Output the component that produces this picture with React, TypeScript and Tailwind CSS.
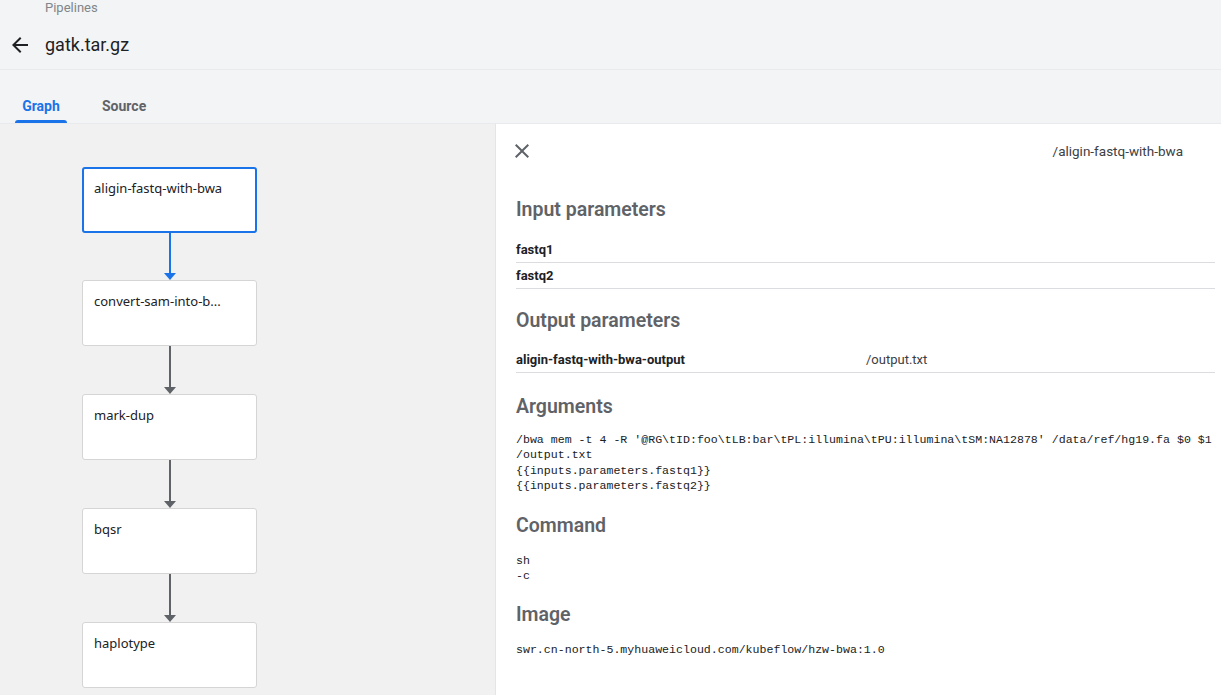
import React from 'react';

const nodes = ['aligin-fastq-with-bwa', 'convert-sam-into-b...', 'mark-dup', 'bqsr', 'haplotype'];

const args = [
  "/bwa mem -t 4 -R '@RG\\tID:foo\\tLB:bar\\tPL:illumina\\tPU:illumina\\tSM:NA12878' /data/ref/hg19.fa $0 $1",
  '/output.txt',
  '{{inputs.parameters.fastq1}}',
  '{{inputs.parameters.fastq2}}',
];

function Edge({ active, h }: { active: boolean; h: string }) {
  const color = active ? 'bg-[#1a73e8]' : 'bg-[#5f6368]';
  const tri = active ? 'border-t-[#1a73e8]' : 'border-t-[#5f6368]';
  return (
    <div className={`${h} w-[175px] flex flex-col items-center`}>
      <div className={`flex-1 w-[2px] ${color}`} />
      <div className={`w-0 h-0 border-l-[6px] border-r-[6px] border-t-[7px] border-l-transparent border-r-transparent ${tri}`} />
    </div>
  );
}

function Heading({ children, className = '' }: { children: React.ReactNode; className?: string }) {
  return (
    <h2 className={`h-[24px] leading-[24px] text-[19.5px] font-semibold text-[#5f6368] ${className}`}>
      {children}
    </h2>
  );
}

export default function App() {
  return (
    <div
      className="w-[1221px] h-[695px] overflow-hidden flex flex-col bg-[#f3f4f5]"
      style={{ fontFamily: 'Roboto, "Liberation Sans", sans-serif' }}
    >
      {/* header */}
      <div className="h-[70px] border-b border-[#e8eaed] shrink-0">
        <div className="h-[16px] leading-[16px] pl-[45px] text-[13px] text-[#80868b]">Pipelines</div>
        <div className="h-[53px] flex items-center pt-[4px]">
          <div className="w-[45px] flex pl-[8px]">
            <svg width="24" height="24" viewBox="0 0 24 24" className="text-[#202124]">
              <path fill="currentColor" d="M20 11H7.83l5.59-5.59L12 4l-8 8 8 8 1.41-1.41L7.83 13H20v-2z" />
            </svg>
          </div>
          <span className="text-[18px] text-[#202124]">gatk.tar.gz</span>
        </div>
      </div>

      {/* tabs */}
      <div className="h-[54px] border-b border-[#e8eaed] flex items-end pl-[15px] gap-[30px] shrink-0">
        <div className="flex flex-col items-center">
          <span className="px-[5px] text-[14px] font-bold text-[#1a73e8] leading-[20px]">Graph</span>
          <div className="mt-[4px] h-[3px] w-[52px] rounded-t-[3px] bg-[#1a73e8]" />
        </div>
        <div className="flex flex-col items-center">
          <span className="px-[5px] text-[14px] font-bold text-[#5f6368] leading-[20px]">Source</span>
          <div className="mt-[4px] h-[3px]" />
        </div>
      </div>

      {/* body */}
      <div className="flex-1 flex min-h-0">
        <div className="w-[496px] shrink-0 bg-[#f1f1f1] border-r border-[#e5e5e5] pl-[82px] pt-[43px]">
          {nodes.map((n, i) => (
            <div key={n}>
              <div
                className={`h-[66px] w-[175px] bg-white rounded-[3px] text-[13px] text-[#202124] ${
                  i === 0 ? 'border-2 border-[#1a73e8] px-[10px] pt-[10px]' : 'border border-[#d5d5d5] px-[11px] pt-[11px]'
                }`}
                style={{ fontFamily: '"Segoe UI", "Noto Sans", sans-serif' }}
              >
                {n}
              </div>
              {i < nodes.length - 1 && <Edge active={i === 0} h={i === 0 ? 'h-[47px]' : 'h-[48px]'} />}
            </div>
          ))}
        </div>

        <div className="flex-1 bg-white min-w-0">
          <div className="h-[54px] flex items-center justify-between pl-[14px] pr-[38px]">
            <svg width="24" height="24" viewBox="0 0 24 24" className="text-[#5f6368]">
              <path
                fill="currentColor"
                d="M19 6.41L17.59 5 12 10.59 6.41 5 5 6.41 10.59 12 5 17.59 6.41 19 12 13.41 17.59 19 19 17.59 13.41 12z"
              />
            </svg>
            <span className="text-[13.5px] text-[#3c4043]">/aligin-fastq-with-bwa</span>
          </div>

          <div className="pl-[20px] pr-[6px]">
            <Heading className="mt-[20px]">Input parameters</Heading>
            <div className="mt-[15px]">
              {['fastq1', 'fastq2'].map((p) => (
                <div key={p} className="h-[26px] border-b border-[#dadce0] flex items-center text-[13px] font-bold text-[#202124]">
                  {p}
                </div>
              ))}
            </div>

            <Heading className="mt-[20px]">Output parameters</Heading>
            <div className="mt-[14px] h-[26px] border-b border-[#dadce0] flex items-center text-[13px] text-[#202124]">
              <span className="w-[350px] font-bold">aligin-fastq-with-bwa-output</span>
              <span className="text-[#3c4043]">/output.txt</span>
            </div>

            <Heading className="mt-[22px]">Arguments</Heading>
            <div
              className="mt-[13px] text-[11.6px] leading-[15.33px] text-[#202124] whitespace-pre overflow-hidden"
              style={{ fontFamily: '"Liberation Mono", monospace' }}
            >
              {args.map((a) => (
                <div key={a}>{a}</div>
              ))}
            </div>

            <Heading className="mt-[21px]">Command</Heading>
            <div
              className="mt-[15px] text-[11.6px] leading-[15px] text-[#202124]"
              style={{ fontFamily: '"Liberation Mono", monospace' }}
            >
              <div>sh</div>
              <div>-c</div>
            </div>

            <Heading className="mt-[20px]">Image</Heading>
            <div
              className="mt-[15px] text-[11.6px] leading-[15px] text-[#202124]"
              style={{ fontFamily: '"Liberation Mono", monospace' }}
            >
              swr.cn-north-5.myhuaweicloud.com/kubeflow/hzw-bwa:1.0
            </div>
          </div>
        </div>
      </div>
    </div>
  );
}
